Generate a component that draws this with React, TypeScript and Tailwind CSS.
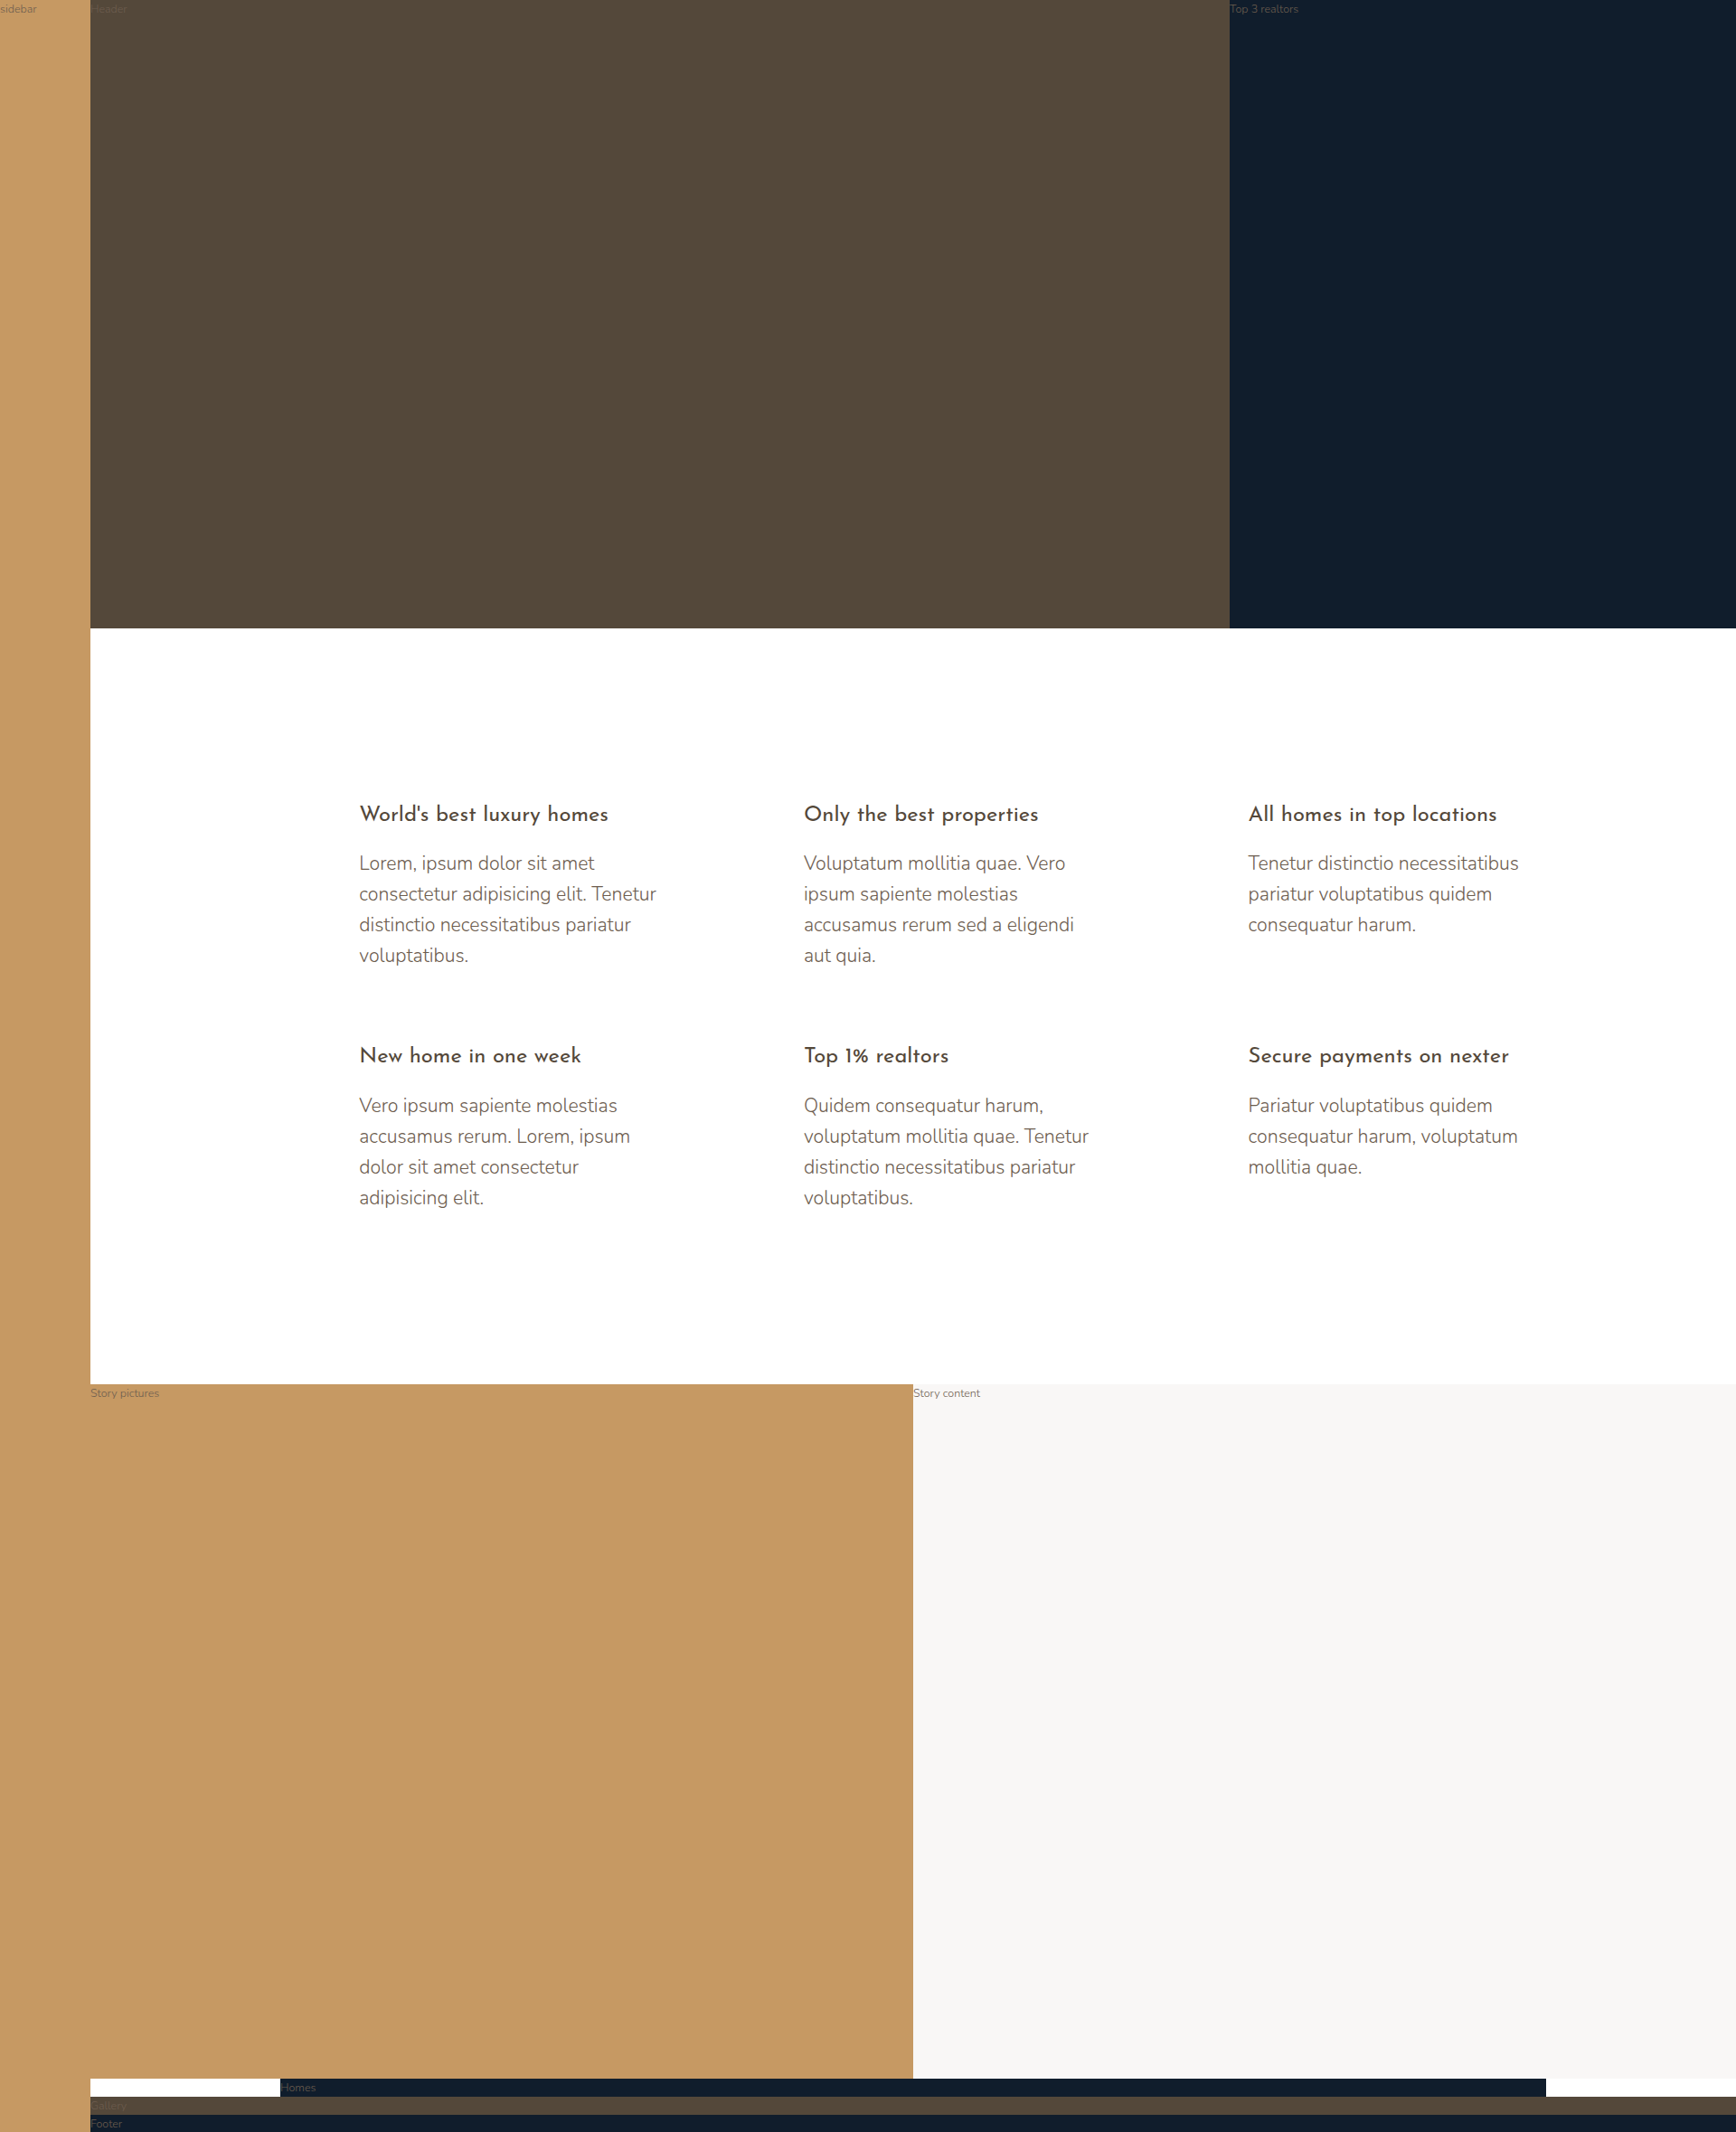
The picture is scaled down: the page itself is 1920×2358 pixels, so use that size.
const features = [
  {
    title: "World's best luxury homes",
    text: "Lorem, ipsum dolor sit amet consectetur adipisicing elit. Tenetur distinctio necessitatibus pariatur voluptatibus.",
  },
  {
    title: "Only the best properties",
    text: "Voluptatum mollitia quae. Vero ipsum sapiente molestias accusamus rerum sed a eligendi aut quia.",
  },
  {
    title: "All homes in top locations",
    text: "Tenetur distinctio necessitatibus pariatur voluptatibus quidem consequatur harum.",
  },
  {
    title: "New home in one week",
    text: "Vero ipsum sapiente molestias accusamus rerum. Lorem, ipsum dolor sit amet consectetur adipisicing elit.",
  },
  {
    title: "Top 1% realtors",
    text: "Quidem consequatur harum, voluptatum mollitia quae. Tenetur distinctio necessitatibus pariatur voluptatibus.",
  },
  {
    title: "Secure payments on nexter",
    text: "Pariatur voluptatibus quidem consequatur harum, voluptatum mollitia quae.",
  },
];

function Feature({ title, text }: { title: string; text: string }) {
  return (
    <div className="grid grid-cols-[56px_1fr] gap-x-[31.25px] gap-y-[18.75px]">
      <div className="row-span-2 w-[56px]" />
      <h4 className="text-[23.75px] leading-[1.6] font-normal text-[#54483a] font-['Josefin_Sans','Lato',sans-serif]">
        {title}
      </h4>
      <p className="text-[21.25px] leading-[34px] font-light text-[#6d5d4f]">
        {text}
      </p>
    </div>
  );
}

export default function App() {
  return (
    <div className="grid grid-cols-[100px_210px_repeat(8,175px)_210px] grid-rows-[695px_min-content_768px_repeat(3,min-content)] text-[12.5px] leading-[20px] font-light text-[#6d5d4f] font-['Nunito','Lato',sans-serif]">
      <div className="col-[1/2] row-[1/-1] bg-[#c69963]">sidebar</div>
      <header className="col-[2/9] bg-[#54483a]">Header</header>
      <div className="col-[9/12] bg-[#101d2c]">Top 3 realtors</div>

      <section className="col-[3/11] my-[187.5px] grid grid-cols-3 gap-[75px] items-start">
        {features.map((f) => (
          <Feature key={f.title} title={f.title} text={f.text} />
        ))}
      </section>

      <div className="col-[2/7] bg-[#c69963]">Story pictures</div>
      <div className="col-[7/12] bg-[#f9f7f6]">Story content</div>

      <section className="col-[3/11] bg-[#101d2c]">Homes</section>
      <section className="col-[2/12] bg-[#54483a]">Gallery</section>
      <footer className="col-[2/12] bg-[#101d2c]">Footer</footer>
    </div>
  );
}
